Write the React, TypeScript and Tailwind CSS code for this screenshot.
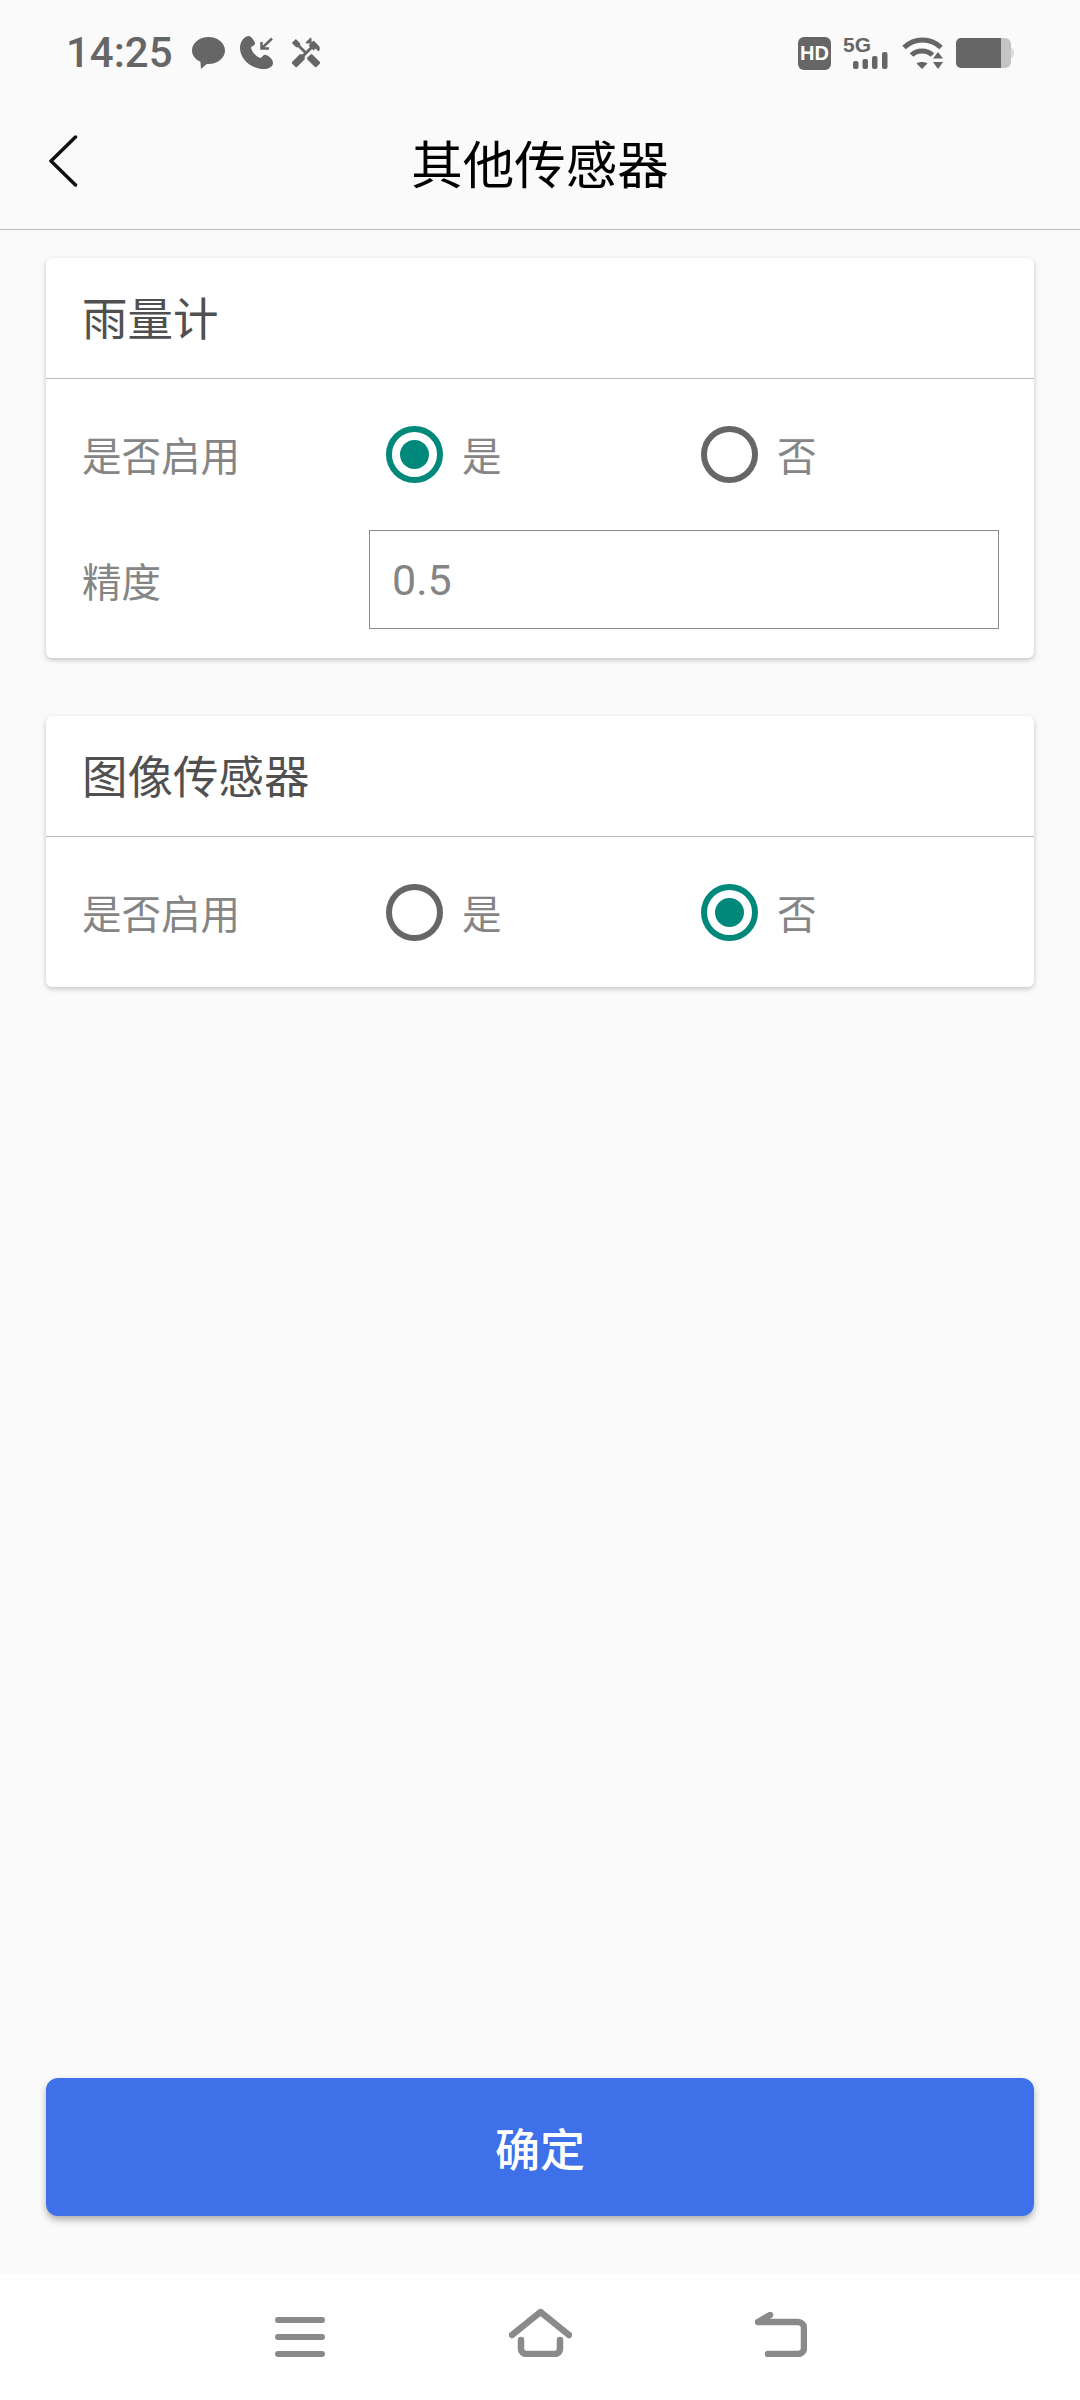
import { MdHandyman } from 'react-icons/md';

const cjk = 'font-["Noto_Sans_CJK_SC","Noto_Sans",sans-serif]';

function StatusBar() {
  return (
    <div className="flex h-[96px] items-center justify-between pl-[66px] pr-[66px] pt-[10px]">
      <div className="flex items-center">
        <span className='font-["Roboto",sans-serif] text-[42px] font-medium leading-none text-[#666666]'>14:25</span>
        <svg className="ml-[19px]" width="33" height="32" viewBox="0 0 33 32">
          <path d="M16.5 0C25.6 0 33 6 33 13.6S25.6 27 16.5 27c-.6 0-1.2 0-1.8-.1L9 32l-.6-7.2C3.3 22.500 0 18.300 0 13.600 0 6 7.400 0 16.500 0Z" fill="#666666" />
        </svg>
        <svg className="ml-[15px]" width="34" height="34" viewBox="0 0 34 34">
          <path d="M9 0C11 0 14 4 15 7C15.500 9 13 10 11 11C11 15 16 21 21 22C23 20 24 18 26 19C29 20 33 23 33 27C33 31 28 33 24 33C10 33 0 22 0 12C0 6 4 0 9 0Z" fill="#666666" />
          <path d="M32 2.500L21.500 12.500M21.500 6V12.500H29" fill="none" stroke="#666666" strokeWidth="2.500" />
        </svg>
        <MdHandyman className="ml-[15px] text-[#666666]" size={34} />
      </div>
      <div className="flex items-center">
        <div className="flex h-[33px] w-[33px] items-center justify-center rounded-[6px] bg-[#666666] font-['Liberation_Sans',sans-serif] text-[20px] font-bold leading-none text-white">
          HD
        </div>
        <div className="ml-[12px] flex h-[32px] w-[45px] flex-col">
          <span className="font-['Liberation_Sans',sans-serif] text-[21px] font-bold leading-[15px] text-[#666666]">5G</span>
          <svg className="self-end" width="35" height="17" viewBox="0 0 35 17">
            <rect x="0" y="9" width="5.500" height="8" rx="2" fill="#666666" />
            <rect x="9.500" y="7" width="5.500" height="10" rx="2" fill="#666666" />
            <rect x="19" y="4" width="5.500" height="13" rx="2" fill="#666666" />
            <rect x="29" y="0" width="5.500" height="17" rx="2" fill="#666666" />
          </svg>
        </div>
        <svg className="ml-[14px]" width="41" height="32" viewBox="0 0 41 32">
          <path d="M2 10.500C12.500 .5 28.500 .5 39 10.500" fill="none" stroke="#666666" strokeWidth="5" />
          <path d="M9.500 18C15 12.500 25 12.500 30.500 18" fill="none" stroke="#666666" strokeWidth="5" />
          <path d="M14.500 26.500C17 24.500 23 24.500 25.500 26.500L20 32Z" fill="#666666" />
          <path d="M36 15L41 21.500H31Z" fill="#666666" />
          <path d="M31 25H41L36 32Z" fill="#666666" />
        </svg>
        <svg className="ml-[13px]" width="58" height="30" viewBox="0 0 58 30">
          <path d="M5 0H45V30H5A5 5 0 0 1 0 25V5A5 5 0 0 1 5 0Z" fill="#666666" />
          <path d="M45 0H49A6 6 0 0 1 55 6V24A6 6 0 0 1 49 30H45Z" fill="#c4c4c4" />
          <path d="M55 10C57 10 58 12 58 15S57 20 55 20Z" fill="#dddddd" />
        </svg>
      </div>
    </div>
  );
}

function Toolbar() {
  return (
    <div className="relative flex h-[134px] items-center justify-center border-b border-[#bdbdbd] pb-[2px]">
      <svg className="absolute left-[48px] top-[39px]" width="30" height="52" viewBox="0 0 30 52">
        <path d="M27.500 2L3 26L27.500 50" fill="none" stroke="#111111" strokeWidth="3.500" strokeLinecap="round" strokeLinejoin="round" />
      </svg>
      <h1 className="text-[51.500px] font-normal leading-none text-black">其他传感器</h1>
    </div>
  );
}

function Radio({ label, checked }: { label: string; checked: boolean }) {
  return (
    <div className="flex flex-1 items-center pl-[17px]">
      <div
        className={`flex h-[57px] w-[57px] items-center justify-center rounded-full border-[6px] ${
          checked ? 'border-[#00897b]' : 'border-[#666666]'
        }`}
      >
        {checked && <div className="h-[29px] w-[29px] rounded-full bg-[#00897b]" />}
      </div>
      <span className="ml-[19px] text-[39.500px] leading-none text-[#858585]">{label}</span>
    </div>
  );
}

function EnableRow({ value }: { value: boolean }) {
  return (
    <div className="flex h-[150px] items-center pl-[36px] pr-[35px]">
      <span className="w-[287px] text-[39.500px] leading-none text-[#858585]">是否启用</span>
      <div className="flex flex-1">
        <Radio label="是" checked={value} />
        <Radio label="否" checked={!value} />
      </div>
    </div>
  );
}

function Card({ title, children }: { title: string; children: React.ReactNode }) {
  return (
    <div className="rounded-[6px] bg-white shadow-[0_2px_5px_rgba(0,0,0,0.22)]">
      <div className="flex h-[121px] items-center border-b border-[#b8b8b8] pb-[2px] pl-[36px] text-[45.500px] leading-none text-[#505050]">
        {title}
      </div>
      {children}
    </div>
  );
}

function NavBar() {
  return (
    <div className="flex h-[126px] justify-center bg-white pt-[35px]">
      <div className="flex w-[240px] justify-center pt-[8px]">
        <svg width="50" height="40" viewBox="0 0 50 40">
          <path d="M3 3H47M3 20H47M3 37H47" fill="none" stroke="#8a8a8a" strokeWidth="6" strokeLinecap="round" />
        </svg>
      </div>
      <div className="flex w-[240px] justify-center">
        <svg width="63" height="48" viewBox="0 0 63 48">
          <path d="M3 26L31.500 3L60 26" fill="none" stroke="#8a8a8a" strokeWidth="6.500" strokeLinecap="round" strokeLinejoin="round" />
          <path d="M12 31V40A5 5 0 0 0 17 45H46A5 5 0 0 0 51 40V31" fill="none" stroke="#8a8a8a" strokeWidth="6.500" strokeLinecap="round" />
        </svg>
      </div>
      <div className="flex w-[240px] justify-center pl-[2px] pt-[3px]">
        <svg width="52" height="45" viewBox="0 0 52 45">
          <path d="M15 3L3 10H43A6 6 0 0 1 49 16V36A6 6 0 0 1 43 42H13" fill="none" stroke="#8a8a8a" strokeWidth="6.500" strokeLinecap="round" strokeLinejoin="round" />
        </svg>
      </div>
    </div>
  );
}

export default function App() {
  return (
    <div className={`flex h-[2400px] w-[1080px] flex-col bg-[#fafafa] ${cjk}`}>
      <StatusBar />
      <Toolbar />
      <div className="flex flex-1 flex-col gap-[58px] px-[46px] pt-[28px]">
        <Card title="雨量计">
          <EnableRow value={true} />
          <div className="flex h-[129px] items-start pl-[36px] pr-[35px] pt-[1px]">
            <span className="flex h-[99px] w-[287px] items-center text-[39.500px] leading-none text-[#858585]">精度</span>
            <input
              readOnly
              value="0.5"
              className='h-[99px] flex-1 border border-[#8a8a8a] bg-white pl-[22px] font-["Roboto",sans-serif] text-[43px] text-[#858585] outline-none'
            />
          </div>
        </Card>
        <Card title="图像传感器">
          <EnableRow value={false} />
        </Card>
      </div>
      <div className="px-[46px] pb-[58px]">
        <button className="flex h-[138px] w-full items-center justify-center rounded-[12px] bg-[#3d70e9] text-[45px] font-medium leading-none text-white shadow-[0_4px_7px_rgba(0,0,0,0.3)]">
          确定
        </button>
      </div>
      <NavBar />
    </div>
  );
}
